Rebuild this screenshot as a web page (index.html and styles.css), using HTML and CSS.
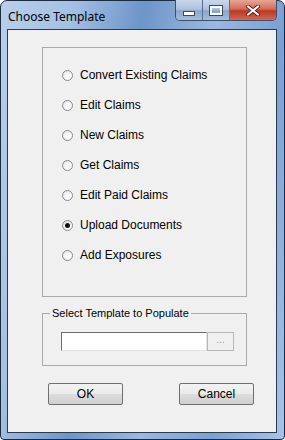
FILE: index.html
```html
<!DOCTYPE html>
<html lang="en">
<head>
    <meta charset="UTF-8">
    <title>Choose Template</title>
    <link rel="stylesheet" href="styles.css">
</head>
<body>
    <div class="window">
        <div class="titlebar">
            <span class="title">Choose Template</span>
            <div class="caption-buttons">
                <div class="cap cap-min"><span class="min-glyph"></span></div>
                <div class="cap cap-max"><span class="max-glyph"></span></div>
                <div class="cap cap-close">
                    <svg width="14" height="11" viewBox="0 0 14 11">
                        <path d="M2 1.5 L12 9.5 M12 1.5 L2 9.5" stroke="#5a2020" stroke-width="4" stroke-linecap="round"/>
                        <path d="M2 1.5 L12 9.5 M12 1.5 L2 9.5" stroke="#fff" stroke-width="2.2" stroke-linecap="round"/>
                    </svg>
                </div>
            </div>
        </div>
        <div class="client">
            <div class="group options">
                <label class="radio"><span class="dot"></span>Convert Existing Claims</label>
                <label class="radio"><span class="dot"></span>Edit Claims</label>
                <label class="radio"><span class="dot"></span>New Claims</label>
                <label class="radio"><span class="dot"></span>Get Claims</label>
                <label class="radio"><span class="dot"></span>Edit Paid Claims</label>
                <label class="radio"><span class="dot checked"></span>Upload Documents</label>
                <label class="radio"><span class="dot"></span>Add Exposures</label>
            </div>
            <fieldset class="group template">
                <legend>Select Template to Populate</legend>
                <div class="picker">
                    <div class="textbox"></div>
                    <div class="browse">...</div>
                </div>
            </fieldset>
            <div class="actions">
                <div class="btn">OK</div>
                <div class="btn">Cancel</div>
            </div>
        </div>
    </div>
</body>
</html>
```

FILE: styles.css
```css
html, body {
    margin: 0;
    padding: 0;
    background: #fff;
}

.window {
    width: 285px;
    height: 440px;
    box-sizing: border-box;
    border: 1px solid #1f2a3b;
    border-radius: 7px 7px 4px 4px;
    background: linear-gradient(100deg, #b9cfeb 0%, #a4c0e4 20%, #6d95c9 40%, #9bb9e0 60%, #7aa0d2 80%, #a9c4e8 100%);
    padding: 0 7px 6px 6px;
    display: flex;
    flex-direction: column;
    font-family: "Liberation Sans", Arial, sans-serif;
    font-size: 12px;
    color: #000;
}

.titlebar {
    height: 28px;
    display: flex;
    justify-content: space-between;
    align-items: flex-start;
}

.title {
    font-family: "Noto Sans", "DejaVu Sans", sans-serif;
    font-size: 12px;
    margin-top: 7px;
    margin-left: 1px;
    color: #000;
}

.caption-buttons {
    display: flex;
    margin-top: -1px;
    border: 1px solid #3e4f68;
    border-top: none;
    border-radius: 0 0 5px 5px;
    overflow: hidden;
    height: 20px;
}

.cap {
    display: flex;
    align-items: center;
    justify-content: center;
    height: 20px;
}

.cap-min, .cap-max {
    width: 26px;
    background: linear-gradient(#c9d8ec 0%, #aec3e0 45%, #8aa6cc 55%, #a6bedc 100%);
    border-right: 1px solid #5c6f8c;
}

.cap-close {
    width: 46px;
    background: linear-gradient(#e7a697 0%, #d66a55 45%, #b93820 55%, #d26a50 100%);
}

.min-glyph {
    width: 10px;
    height: 3px;
    background: #fff;
    border: 1px solid #3a4a62;
    margin-top: 6px;
}

.max-glyph {
    width: 8px;
    height: 5px;
    border: 2px solid #fff;
    outline: 1px solid #3a4a62;
}

.client {
    flex: 1;
    background: #f0f0f0;
    border: 1px solid #2c3a4f;
    display: flex;
    flex-direction: column;
    padding: 17px 0 0 34px;
}

.group {
    border: 1px solid #aaaaaa;
    box-sizing: border-box;
    width: 205px;
}

.options {
    height: 250px;
    padding: 12px 0 0 19px;
    display: flex;
    flex-direction: column;
}

.radio {
    height: 30px;
    display: flex;
    align-items: center;
    gap: 7px;
}

.dot {
    width: 11px;
    height: 11px;
    border-radius: 50%;
    box-sizing: border-box;
    border: 1px solid #8a8a8a;
    background: radial-gradient(circle at 60% 60%, #ffffff 30%, #e6e6e6 70%, #cfcfcf 100%);
    display: flex;
    align-items: center;
    justify-content: center;
}

.dot.checked::after {
    content: "";
    width: 5px;
    height: 5px;
    border-radius: 50%;
    background: #111;
}

.template {
    margin: 10px 0 0 0;
    padding: 0;
    height: 59px;
}

.template legend {
    padding: 0 2px;
    margin-left: 7px;
    font-size: 11px;
}

.picker {
    display: flex;
    margin: 13px 0 0 18px;
}

.textbox {
    width: 146px;
    height: 19px;
    box-sizing: border-box;
    background: #fff;
    border: 1px solid #6c6c6c;
    border-right-color: #e3e3e3;
    border-bottom-color: #e3e3e3;
}

.browse {
    width: 27px;
    height: 19px;
    box-sizing: border-box;
    border: 1px solid #b7b7b7;
    background: #f0f0f0;
    color: #9a9a9a;
    font-size: 10px;
    text-align: center;
    line-height: 14px;
}

.actions {
    display: flex;
    gap: 56px;
    margin: 17px 0 0 6px;
}

.btn {
    width: 75px;
    height: 22px;
    box-sizing: border-box;
    border: 1px solid #707070;
    background: linear-gradient(#f2f2f2 0%, #ebebeb 50%, #dddddd 51%, #cfcfcf 100%);
    text-align: center;
    line-height: 20px;
    border-radius: 2px;
}
```
